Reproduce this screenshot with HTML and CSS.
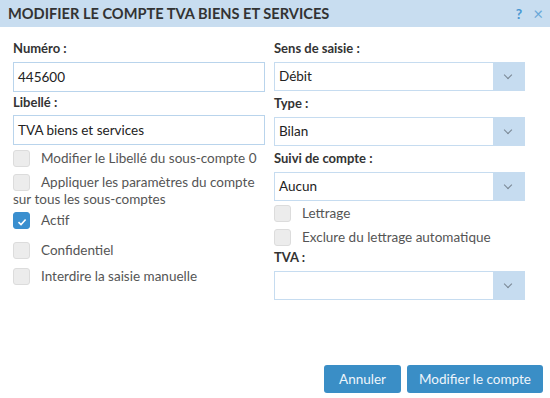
FILE: index.html
```
<!DOCTYPE html>
<html>
	<head>
		<meta charset="utf-8">
		<title>Modifier le compte</title>
		<link rel="stylesheet" href="styles.css">
	</head>
	<body>
		<section class="dialog">
			<header class="head">
				<h1>Modifier le compte TVA biens et services</h1>
				<span class="help">?</span>
				<span class="close">&times;</span>
			</header>
			<div class="body">
				<div class="col">
					<label class="lbl">Numéro :</label>
					<div class="input">445600</div>
					<label class="lbl">Libellé :</label>
					<div class="input">TVA biens et services</div>
					<div class="check first"><span class="box"></span>Modifier le Libellé du sous-compte 0</div>
					<div class="check wrapline"><span class="box"></span>Appliquer les paramètres du compte sur tous les sous-comptes</div>
					<div class="check actif"><span class="box on">
						<svg width="10" height="8" viewBox="0 0 10 8"><path d="M1.5 4.2 L4 6.5 L8.6 1.5" fill="none" stroke="#fff" stroke-width="1.6"/></svg>
					</span>Actif</div>
					<div class="check conf"><span class="box"></span>Confidentiel</div>
					<div class="check inter"><span class="box"></span>Interdire la saisie manuelle</div>
				</div>
				<div class="col">
					<label class="lbl">Sens de saisie :</label>
					<div class="select"><span>Débit</span><i class="arrow"></i></div>
					<label class="lbl">Type :</label>
					<div class="select"><span>Bilan</span><i class="arrow"></i></div>
					<label class="lbl">Suivi de compte :</label>
					<div class="select"><span>Aucun</span><i class="arrow"></i></div>
					<div class="check lettr"><span class="box"></span>Lettrage</div>
					<div class="check"><span class="box"></span>Exclure du lettrage automatique</div>
					<label class="lbl tva">TVA :</label>
					<div class="select"><span></span><i class="arrow"></i></div>
				</div>
			</div>
			<footer class="foot">
				<a href="javascript:;" class="btn annuler">Annuler</a>
				<a href="javascript:;" class="btn">Modifier le compte</a>
			</footer>
		</section>
	</body>
</html>
```

FILE: styles.css
```
body {
	margin: 0;
	font-family: "Lato", "Open Sans", sans-serif;
	font-size: 13.5px;
	color: #333;
	background: #fff;
}

.dialog {
	width: 550px;
	height: 398px;
	display: flex;
	flex-direction: column;
}

.head {
	height: 27px;
	background: #c8ddf0;
	display: flex;
	align-items: center;
	padding: 0 7px 0 8px;
}

.head h1 {
	margin: 0;
	flex: 1;
	font-size: 14.6px;
	font-weight: bold;
	text-transform: uppercase;
	color: #333;
}

.help {
	color: #4a97d2;
	font-weight: bold;
	font-size: 14px;
	margin-right: 11px;
}

.close {
	color: #6aa8d8;
	font-size: 17px;
}

.body {
	display: grid;
	grid-template-columns: 252px 251px;
	column-gap: 9px;
	padding: 11px 0 0 13px;
	flex: 1;
}

.lbl {
	display: block;
	font-weight: bold;
	font-size: 13px;
	line-height: 20px;
	margin-bottom: 4px;
}

.input {
	height: 30px;
	box-sizing: border-box;
	border: 1px solid #b9d4ec;
	padding: 0 4px;
	line-height: 28px;
	color: #222;
}

.input + .lbl {
	margin-bottom: 3px;
}

.select {
	height: 29px;
	box-sizing: border-box;
	border: 1px solid #c6dcf0;
	display: flex;
	color: #222;
	margin-bottom: 2px;
}

.select span {
	flex: 1;
	padding: 0 4px;
	line-height: 27px;
}

.arrow {
	width: 31px;
	background: #c6dcf0;
	position: relative;
}

.arrow::after {
	content: "";
	position: absolute;
	left: 12px;
	top: 9px;
	width: 5px;
	height: 5px;
	border-right: 1.5px solid #7a8794;
	border-bottom: 1.5px solid #7a8794;
	transform: rotate(45deg);
}

.check {
	color: #555;
	line-height: 17px;
	margin-bottom: 7px;
}

.box {
	display: inline-block;
	width: 17px;
	height: 17px;
	box-sizing: border-box;
	border: 1px solid #dcdcdc;
	border-radius: 3px;
	background: #ececec;
	vertical-align: middle;
	margin: -2px 11px 0 0;
}

.box.on {
	background: #3a8fcf;
	border-color: #3a8fcf;
	text-align: center;
	line-height: 15px;
}

.box.on svg {
	vertical-align: middle;
}

.first {
	margin-top: 5px;
}

.wrapline {
	margin-bottom: 4px;
}

.actif {
	margin-bottom: 13px;
}

.conf {
	margin-bottom: 9px;
}

.lettr {
	margin-top: 4px;
}

.tva {
	margin-top: -6px;
}

.foot {
	display: flex;
	justify-content: flex-end;
	gap: 6px;
	padding: 0 7px 5px 0;
}

.btn {
	background: #3a8ec6;
	color: #eef5fb;
	text-decoration: none;
	height: 28px;
	line-height: 28px;
	padding: 0 12px;
	border-radius: 3px;
}

.annuler {
	padding: 0 15px;
}
```
